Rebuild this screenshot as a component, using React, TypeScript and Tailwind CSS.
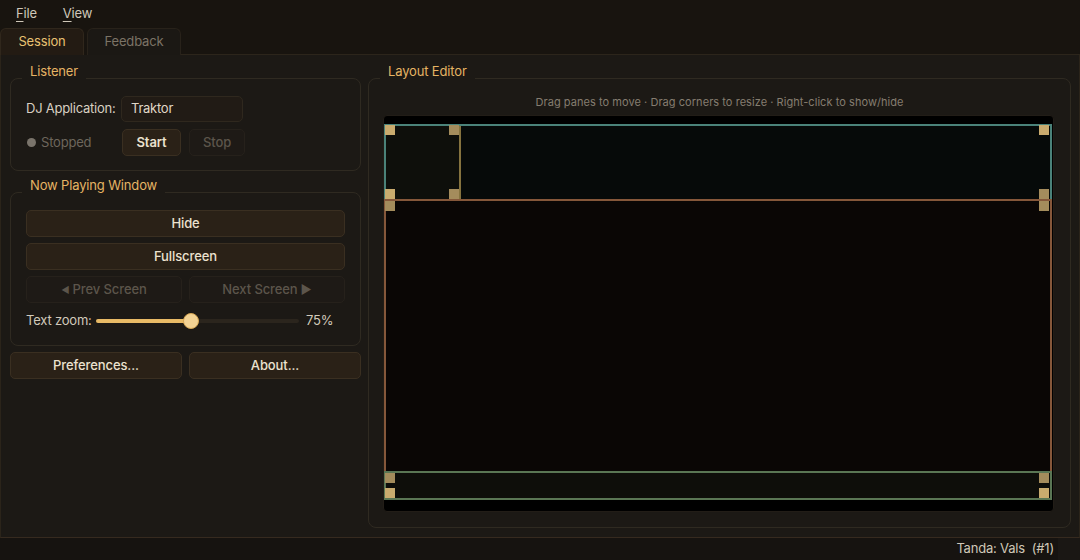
import React from "react";

const font = { fontFamily: "Inter, 'Noto Sans', 'Liberation Sans', sans-serif" };

function Group({ title, className, children }: { title: string; className?: string; children: React.ReactNode }) {
  return (
    <div className={"relative rounded-[8px] border border-[#2f2a21] " + (className ?? "")}>
      <span className="absolute left-[11px] top-[-16px] h-[16px] bg-[#1c1915] px-[8px] text-[13px] leading-[16px] tracking-[-0.15px] text-[#e5b464]">
        {title}
      </span>
      {children}
    </div>
  );
}

function Btn({ children, className, disabled }: { children: React.ReactNode; className?: string; disabled?: boolean }) {
  return (
    <div
      className={
        "flex items-center justify-center rounded-[5px] border text-[13px] font-medium tracking-[-0.1px] " +
        (disabled
          ? "border-[#26211b] bg-[#1e1a16] text-[#5c554b] "
          : "border-[#3a2f21] bg-[#2a2117] text-[#ece2cf] ") +
        (className ?? "")
      }
    >
      {children}
    </div>
  );
}

function Handle({ x, y, bright }: { x: number; y: number; bright?: boolean }) {
  return (
    <div
      className={"absolute h-[10px] w-[10px] " + (bright ? "bg-[#c9ab6e]" : "bg-[#a48c5c]")}
      style={{ left: x, top: y }}
    />
  );
}

export default function App() {
  return (
    <div style={font} className="flex h-[560px] w-[1080px] flex-col overflow-hidden bg-[#1c1915] text-[#d9d1c3]">
      {/* Menu bar */}
      <div className="flex h-[27px] items-center bg-[#18140f] text-[13px] tracking-[-0.2px] text-[#cfc7b8]">
        <span className="ml-[16px]">
          <span className="underline underline-offset-[3px]">F</span>ile
        </span>
        <span className="ml-[26px]">
          <span className="underline underline-offset-[3px]">V</span>iew
        </span>
      </div>
      {/* Tabs */}
      <div className="flex h-[28px] items-end bg-[#18140f] tracking-[-0.15px]">
        <div className="flex h-[27px] w-[84px] items-center justify-center rounded-t-[6px] border border-b-0 border-[#30271c] bg-[#231b13] text-[13px] text-[#e8c272]">
          Session
        </div>
        <div className="ml-[3px] flex h-[27px] w-[94px] items-center justify-center rounded-t-[6px] border border-b-0 border-[#28221a] bg-[#1b1814] text-[13px] text-[#7b7366]">
          Feedback
        </div>
        <div className="h-px flex-1 bg-[#2c251b]" />
      </div>
      {/* Panel */}
      <div className="flex flex-1 gap-[7px] border-x border-b border-[#2b241a] border-b-[#362a1f] pl-[9px] pr-[8px] pt-[23px]">
        {/* Left column */}
        <div className="flex w-[351px] flex-col">
          <Group title="Listener" className="px-[15px] pb-[14px] pt-[17px]">
            <div className="flex h-[26px] items-center tracking-[-0.25px]">
              <span className="w-[95px] text-[13px] text-[#d8d0c2]">DJ Application:</span>
              <div className="flex h-[26px] w-[122px] items-center rounded-[5px] border border-[#2f281e] bg-[#211b15] pl-[9px] text-[13px] text-[#e0d8c8]">
                Traktor
              </div>
            </div>
            <div className="mt-[7px] flex h-[27px] items-center">
              <div className="flex w-[96px] items-center tracking-[-0.2px]">
                <span className="ml-[1px] h-[9px] w-[9px] rounded-full bg-[#7a746b]" />
                <span className="ml-[5px] text-[13px] text-[#6d665c]">Stopped</span>
              </div>
              <Btn className="h-[27px] w-[59px] !font-semibold">Start</Btn>
              <Btn disabled className="ml-[8px] h-[27px] w-[56px]">
                Stop
              </Btn>
            </div>
          </Group>
          <Group title="Now Playing Window" className="mt-[21px] px-[15px] pb-[15px] pt-[17px]">
            <Btn className="h-[27px]">Hide</Btn>
            <Btn className="mt-[6px] h-[27px]">Fullscreen</Btn>
            <div className="mt-[6px] flex gap-[7px]">
              <Btn disabled className="h-[27px] flex-1">
                <span className="mr-[3px] text-[9px]">◀</span>Prev Screen
              </Btn>
              <Btn disabled className="h-[27px] flex-1">
                Next Screen<span className="ml-[3px] text-[12px]">▶</span>
              </Btn>
            </div>
            <div className="mt-[9px] flex h-[18px] items-center tracking-[-0.2px]">
              <span className="w-[70px] text-[13px] text-[#d2cabb]">Text zoom:</span>
              <div className="relative h-[4px] w-[203px] rounded-full bg-[#2b251d]">
                <div className="absolute left-0 top-0 h-[4px] w-[95px] rounded-full bg-[#e8ba66]" />
                <div className="absolute left-[87px] top-[-6px] h-[16px] w-[16px] rounded-full border border-[#d5a754] bg-[#f3d394]" />
              </div>
              <span className="ml-[7px] text-[13px] text-[#d2cabb]">75%</span>
            </div>
          </Group>
          <div className="mt-[6px] flex gap-[7px]">
            <Btn className="h-[27px] w-[172px]">Preferences...</Btn>
            <Btn className="h-[27px] flex-1">About...</Btn>
          </div>
        </div>
        {/* Right column */}
        <Group title="Layout Editor" className="mb-[9px] flex-1 px-[14px] pb-[14px] pt-[15px]">
          <div className="flex h-[17px] items-center justify-center text-[11px] tracking-[0.05px] text-[#857d70]">
            Drag panes to move · Drag corners to resize · Right-click to show/hide
          </div>
          <div className="relative mt-[4px] h-[397px] w-[671px] overflow-hidden rounded-[4px] border border-[#221d17] bg-black">
            {/* top pane */}
            <div className="absolute left-0 top-[8px] h-[77px] w-[668px] border-2 border-[#4a8279] bg-[#060a09]" />
            <div className="absolute left-[2px] top-[10px] h-[73px] w-[75px] border-r-2 border-[#85733f] bg-[#0e0f0b]" />
            {/* middle pane */}
            <div className="absolute left-0 top-[83px] h-[274px] w-[668px] border-2 border-[#85573a] bg-[#0a0605]" />
            {/* bottom pane */}
            <div className="absolute left-0 top-[355px] h-[29px] w-[668px] border-2 border-[#5a7654] bg-[#0e0e0a]" />
            <Handle x={1} y={9} bright />
            <Handle x={65} y={9} />
            <Handle x={1} y={73} bright />
            <Handle x={65} y={73} />
            <Handle x={655} y={9} bright />
            <Handle x={655} y={73} />
            <Handle x={1} y={85} />
            <Handle x={655} y={85} />
            <Handle x={1} y={357} />
            <Handle x={655} y={357} />
            <Handle x={1} y={372} bright />
            <Handle x={655} y={372} bright />
          </div>
        </Group>
      </div>
      {/* Status bar */}
      <div className="flex h-[22px] items-center justify-end bg-[#161310]">
        <span className="text-[13px] tracking-[-0.2px] text-[#cfc7b7]">Tanda: Vals&nbsp;&nbsp;(#1)</span>
        <div className="ml-[4px] h-full w-[22px] bg-[#1a1714]" />
      </div>
    </div>
  );
}
